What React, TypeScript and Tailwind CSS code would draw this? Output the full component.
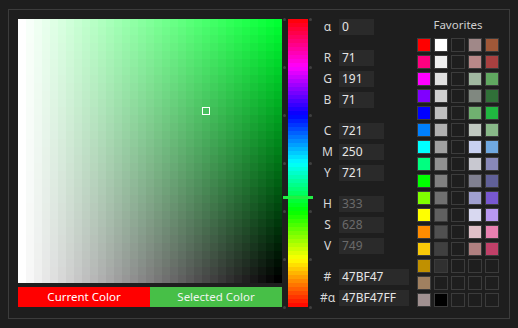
import React from "react";

const HUE: [number, number, number] = [0, 255, 50];
const N = 33;

function svColor(i: number, j: number): string {
  const x = i / (N - 1);
  const y = j / (N - 1);
  const c = HUE.map((h) => Math.round((1 - x) * 255 + x * (1 - y) * h));
  return `rgb(${c[0]},${c[1]},${c[2]})`;
}

function hueColor(h: number): string {
  const hh = (((h % 360) + 360) % 360) / 60;
  const i = Math.floor(hh);
  const f = hh - i;
  const q = Math.round(255 * (1 - f));
  const t = Math.round(255 * f);
  let r = 0, g = 0, b = 0;
  switch (i) {
    case 0: r = 255; g = t; b = 0; break;
    case 1: r = q; g = 255; b = 0; break;
    case 2: r = 0; g = 255; b = t; break;
    case 3: r = 0; g = q; b = 255; break;
    case 4: r = t; g = 0; b = 255; break;
    default: r = 255; g = 0; b = q;
  }
  return `rgb(${r},${g},${b})`;
}

const svCells: { key: string; color: string }[] = [];
for (let j = 0; j < N; j++) {
  for (let i = 0; i < N; i++) {
    svCells.push({ key: `${i}-${j}`, color: svColor(i, j) });
  }
}

const HUE_BANDS = 72;
const hueBands = Array.from({ length: HUE_BANDS }, (_, k) =>
  hueColor(360 * (1 - (k + 0.5) / HUE_BANDS))
);

const dotOffsets = [0, 48, 96, 144, 192, 240, 288];

type Fav = string | null;
const favorites: Fav[][] = [
  ["#ff0000", "#ffffff", null, "#a08888", "#a05838"],
  ["#ff0080", "#f0f0f0", null, "#b88888", "#a84040"],
  ["#ff00ff", "#e0e0e0", null, "#a0b8a0", "#60a860"],
  ["#8000ff", "#d0d0d0", null, "#808880", "#307038"],
  ["#0000ff", "#c0c0c0", null, "#70b070", "#20b840"],
  ["#0080ff", "#b0b0b0", null, "#c0c8c0", "#88b888"],
  ["#00ffff", "#a0a0a0", null, "#c8d0f0", "#70a8e0"],
  ["#00ff80", "#909090", null, "#c8c8d0", "#8888b8"],
  ["#00ff00", "#808080", null, "#808090", "#606098"],
  ["#80ff00", "#707070", null, "#a0a0d0", "#7858d0"],
  ["#ffff00", "#606060", null, "#d8d8f0", "#b898f0"],
  ["#ff8c00", "#505050", null, "#e0c0c8", "#e880b0"],
  ["#f8c808", "#404040", null, "#b08080", "#c04068"],
  ["#c09000", "#303030", null, null, null],
  ["#a08060", null, null, null, null],
  ["#a09090", "#000000", null, null, null],
];

type Field = { label: string; value: string; w: "s" | "m" | "l"; dim?: boolean };
const groups: Field[][] = [
  [{ label: "α", value: "0", w: "s" }],
  [
    { label: "R", value: "71", w: "s" },
    { label: "G", value: "191", w: "s" },
    { label: "B", value: "71", w: "s" },
  ],
  [
    { label: "C", value: "721", w: "m" },
    { label: "M", value: "250", w: "m" },
    { label: "Y", value: "721", w: "m" },
  ],
  [
    { label: "H", value: "333", w: "m", dim: true },
    { label: "S", value: "628", w: "m", dim: true },
    { label: "V", value: "749", w: "m", dim: true },
  ],
  [
    { label: "#", value: "47BF47", w: "l" },
    { label: "#α", value: "47BF47FF", w: "l" },
  ],
];

function FieldRow({ f }: { f: Field }) {
  const width = f.w === "s" ? "w-[35px]" : f.w === "m" ? "w-[45px]" : "w-[70px]";
  return (
    <div className="flex h-[16px] items-center">
      <div className="w-[23px] text-center text-[12px] leading-[16px] text-[#d8d8d8]">{f.label}</div>
      <div
        className={`${width} h-[16px] bg-[#2a2a2a] pl-[3px] text-[12px] leading-[16px] ${
          f.dim ? "text-[#6a6a6a]" : "text-[#e6e6e6]"
        }`}
      >
        {f.value}
      </div>
    </div>
  );
}

export default function App() {
  return (
    <div
      className="w-[518px] h-[328px] bg-[#1e1e1e] pt-[9px] pl-[8px] pr-[8px] pb-[9px] overflow-hidden"
      style={{ fontFamily: '"Noto Sans", "Open Sans", sans-serif' }}
    >
      <div className="h-[310px] border border-[#3c3c3c] flex items-start">
        {/* SV + color bars */}
        <div className="ml-[9px] mt-[9px] w-[264px] flex flex-col gap-[4px]">
          <div className="relative w-[264px] h-[264px]">
            <div className="grid grid-cols-[repeat(33,8px)]">
              {svCells.map((c) => (
                <div key={c.key} className="h-[8px]" style={{ backgroundColor: c.color }} />
              ))}
            </div>
            <div className="absolute left-[184px] top-[88px] w-[8px] h-[8px] border border-white" />
          </div>
          <div className="flex h-[20px]">
            <div className="flex-1 bg-[#ff0000] flex items-center justify-center text-[11.5px] text-white">
              Current Color
            </div>
            <div className="flex-1 bg-[#47bf47] flex items-center justify-center text-[11.5px] text-[#eef4ee]">
              Selected Color
            </div>
          </div>
        </div>

        {/* Hue bar */}
        <div className="ml-[6px] mt-[9px] relative w-[20px] h-[288px]">
          <div className="flex flex-col">
            {hueBands.map((c, k) => (
              <div key={k} className="h-[4px]" style={{ backgroundColor: c }} />
            ))}
          </div>
          {dotOffsets.map((d) => (
            <React.Fragment key={d}>
              <div
                className="absolute left-[-5px] w-[3px] h-[3px] rounded-full bg-[#404040]"
                style={{ top: d - 1 }}
              />
              <div
                className="absolute right-[-4px] w-[3px] h-[3px] rounded-full bg-[#404040]"
                style={{ top: d - 1 }}
              />
            </React.Fragment>
          ))}
          <div className="absolute left-[-5px] top-[177px] w-[30px] h-[3px] bg-[#22ee44]" />
        </div>

        {/* Values */}
        <div className="ml-[8px] mt-[9px] w-[94px] flex flex-col gap-[15px]">
          {groups.map((g, gi) => (
            <div key={gi} className="flex flex-col gap-[5px]">
              {g.map((f) => (
                <FieldRow key={f.label} f={f} />
              ))}
            </div>
          ))}
        </div>

        {/* Favorites */}
        <div className="ml-[7px] mt-[7px] w-[82px] flex flex-col">
          <div className="h-[16px] text-center text-[11.5px] leading-[16px] text-[#d0d0d0]">Favorites</div>
          <div className="mt-[5px] grid grid-cols-[repeat(5,14px)] gap-[3px]">
            {favorites.flatMap((row, ri) =>
              row.map((c, ci) => (
                <div
                  key={`${ri}-${ci}`}
                  className="w-[14px] h-[14px] border border-[#3c3c3c]"
                  style={{ backgroundColor: c ?? "#1e1e1e" }}
                />
              ))
            )}
          </div>
        </div>
      </div>
    </div>
  );
}
